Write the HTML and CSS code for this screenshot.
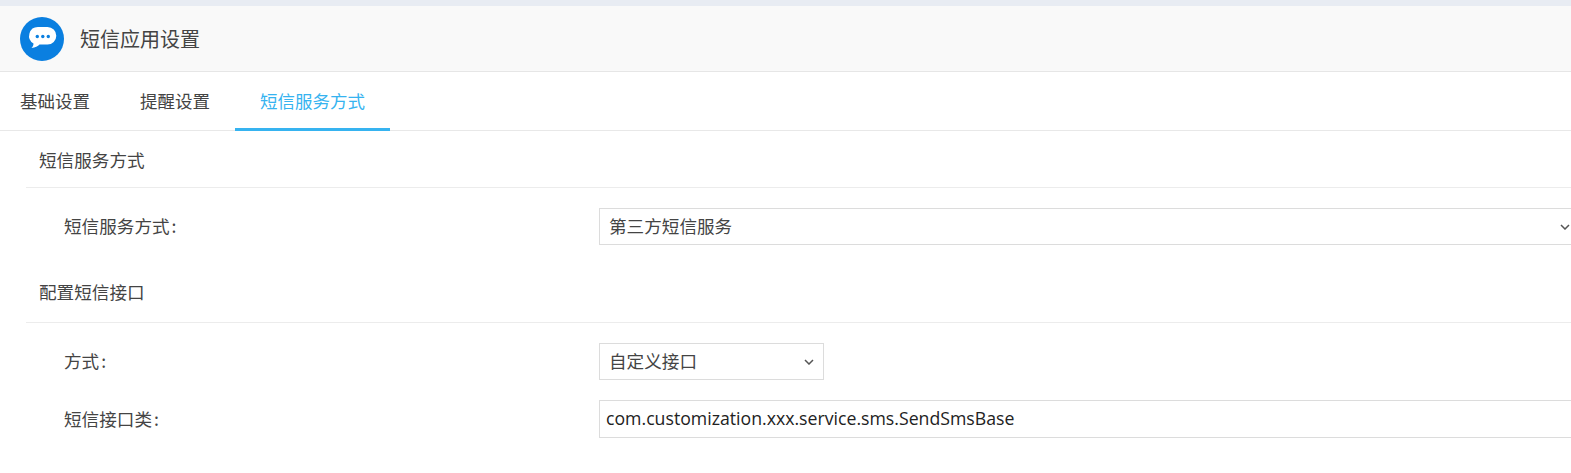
FILE: index.html
```html
<!DOCTYPE html>
<html lang="zh-CN">
<head>
<meta charset="utf-8">
<title>短信应用设置</title>
<link rel="stylesheet" href="styles.css">
</head>
<body>
<div class="page">
  <header class="app-header">
    <svg class="app-icon" width="44" height="44" viewBox="0 0 44 44">
      <circle cx="22" cy="22" r="22" fill="#0a7fe0"/>
      <path d="M18 10h9.500a8.800 8.800 0 0 1 0 17.600H19.500c-1.600 1.800-4.200 3-8 3.400 1.300-1.300 2-2.800 2-4.600A8.800 8.800 0 0 1 18 10z" fill="#fff"/>
      <circle cx="17.300" cy="19.500" r="1.700" fill="#0a7fe0"/>
      <circle cx="22.800" cy="19.500" r="1.700" fill="#0a7fe0"/>
      <circle cx="28.300" cy="19.500" r="1.700" fill="#0a7fe0"/>
    </svg>
    <h1 class="app-title">短信应用设置</h1>
  </header>
  <nav class="tabs">
    <a class="tab">基础设置</a>
    <a class="tab">提醒设置</a>
    <a class="tab tab-active">短信服务方式</a>
  </nav>
  <main class="content">
    <h2 class="section-title">短信服务方式</h2>
    <div class="form-row row-first">
      <label class="form-label">短信服务方式<span class="colon">:</span></label>
      <div class="control control-wide control-select">
        <span class="control-text">第三方短信服务</span>
        <svg class="chevron" width="10" height="6" viewBox="0 0 10 6"><path d="M1 1l4 4 4-4" fill="none" stroke="#555" stroke-width="1.500"/></svg>
      </div>
    </div>
    <h2 class="section-title section-title-second">配置短信接口</h2>
    <div class="form-row row-method">
      <label class="form-label">方式<span class="colon">:</span></label>
      <div class="control control-small control-select">
        <span class="control-text">自定义接口</span>
        <svg class="chevron" width="10" height="6" viewBox="0 0 10 6"><path d="M1 1l4 4 4-4" fill="none" stroke="#555" stroke-width="1.500"/></svg>
      </div>
    </div>
    <div class="form-row row-class">
      <label class="form-label">短信接口类<span class="colon">:</span></label>
      <div class="control control-wide control-tall control-input"><span class="control-text">com.customization.xxx.service.sms.SendSmsBase</span></div>
    </div>
  </main>
</div>
</body>
</html>
```
FILE: styles.css
```css
* { box-sizing: border-box; }
html, body { margin: 0; padding: 0; height: 100%; overflow: hidden; background: #fff; }
body {
  font-family: "Noto Sans CJK SC", "Open Sans", sans-serif;
  font-size: 17.6px;
  color: #333;
}
.page { border-top: 6px solid #e8ecf3; }
.app-header {
  height: 66px;
  display: flex;
  align-items: center;
  padding: 1px 0 0 20px;
  background: #f9f9f9;
  border-bottom: 1px solid #e6e6e6;
}
.app-icon { display: block; margin-right: 16px; }
.app-title { margin: 0; font-size: 20px; font-weight: 400; color: #444; line-height: 44px; }
.tabs {
  display: flex;
  height: 59px;
  padding-left: 20px;
  border-bottom: 1px solid #e8e8e8;
  font-size: 17.5px;
}
.tab {
  height: 59px;
  line-height: 57px;
  padding: 0 25px;
  color: #444;
}
.tab:first-child { padding-left: 0; }
.tab-active { color: #36b3f0; border-bottom: 3px solid #36b3f0; }
.content { margin-left: 26px; }
.section-title {
  margin: 0;
  height: 57px;
  padding-left: 13px;
  font-size: 17.6px;
  font-weight: 400;
  line-height: 58px;
  color: #444;
  border-bottom: 1px solid #ececec;
}
.section-title-second { height: 59px; margin-top: 19px; line-height: 56px; }
.form-row { display: flex; align-items: center; padding-left: 38px; }
.row-first { margin-top: 20px; }
.row-method { margin-top: 20px; }
.row-class { margin-top: 20px; }
.form-label { flex: 0 0 535px; color: #444; position: relative; top: -1px; }
.colon { margin-left: 2px; }
.control {
  height: 37px;
  border: 1.500px solid #dcdcdc;
  display: flex;
  align-items: center;
  justify-content: space-between;
}
.control-text { position: relative; top: -1px; }
.control-select { padding: 0 9px; color: #444; }
.control-wide { flex: 0 0 985px; }
.control-wide.control-select { padding-right: 13px; }
.control-small { flex: 0 0 225px; }
.control-tall { height: 38px; }
.control-input { padding-left: 6px; color: #222; font-family: "Open Sans", "Noto Sans CJK SC", sans-serif; font-size: 17.7px; }
.chevron { display: block; }
```
